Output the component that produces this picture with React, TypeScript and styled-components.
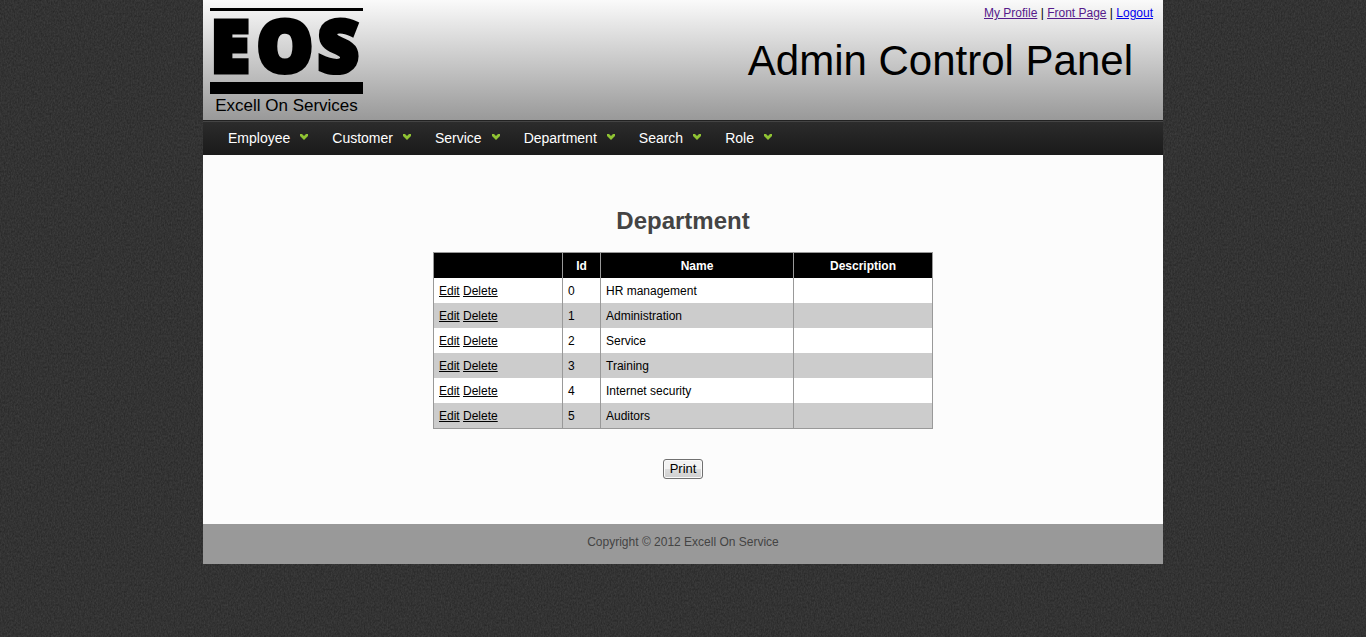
import React from "react";
import styled, { createGlobalStyle } from "styled-components";

const GlobalStyle = createGlobalStyle`
  body {
    margin: 0;
    background: #333;
    color: #000;
    font: 12px/16px "Liberation Sans", Arial, sans-serif;
  }
`;

const Texture = styled.svg`
  position: fixed;
  inset: 0;
  z-index: -1;
  width: 100%;
  height: 100%;
`;

const Page = styled.div`
  max-width: 960px;
  margin: 0 auto;
  background: #fcfcfc;
`;

const Header = styled.header`
  display: flex;
  justify-content: space-between;
  height: 120px;
  background: linear-gradient(#fafafa, #999);
`;

const Brand = styled.div`
  display: flex;
  flex-direction: column;
  width: 153px;
  margin: 8px 0 0 7px;
  text-align: center;
`;

const BrandMark = styled.svg`
  display: block;
  width: 153px;
  height: 86px;
  overflow: visible;

  text {
    font: 800 70px "Open Sans", "Liberation Sans", sans-serif;
    stroke: #000;
    stroke-width: 5px;
  }
`;

const BrandName = styled.span`
  font-size: 17px;
  line-height: 24px;
`;

const HeaderSide = styled.div`
  display: flex;
  flex-direction: column;
  align-items: flex-end;
  padding: 5px 10px 0 0;
`;

const PageLink = styled.a<{ $visited?: boolean }>`
  color: ${(p) => (p.$visited ? "#551a8b" : "#0000ee")};
`;

const PanelTitle = styled.h1`
  margin: 16px 20px 0 0;
  font-size: 42px;
  font-weight: 400;
  line-height: 48px;
`;

const Nav = styled.nav`
  display: flex;
  gap: 24px;
  box-sizing: border-box;
  height: 35px;
  padding: 0 25px;
  border-top: 1px solid #222;
  background: linear-gradient(#2c2c2c, #1a1a1a);
  box-shadow: inset 0 1px #444;
`;

const NavItem = styled.a`
  display: flex;
  align-items: center;
  gap: 10px;
  color: #fff;
  font-size: 14px;
  line-height: 34px;
  text-decoration: none;
`;

const Arrow = styled.svg`
  width: 8px;
  height: 6px;
  margin-bottom: 3px;
  fill: #8fc333;
`;

const Main = styled.main`
  display: flex;
  flex-direction: column;
  align-items: center;
  padding: 50px 20px 45px;
`;

const Heading = styled.h2`
  margin: 0 0 15px;
  color: #444;
  font-size: 24px;
  line-height: 32px;
`;

const Table = styled.table`
  width: 500px;
  max-width: 100%;
  table-layout: fixed;
  border-collapse: collapse;
  border: 1px solid #999;
  background: #fff;
`;

const Column = styled.col<{ $width?: number }>`
  width: ${(p) => (p.$width ? `${p.$width}px` : "auto")};
`;

const HeadCell = styled.th`
  height: 25px;
  padding: 0 5px;
  border: solid #999;
  border-width: 0 1px;
  background: #000;
  color: #fff;
`;

const Row = styled.tr`
  &:nth-child(even) {
    background: #ccc;
  }
`;

const Cell = styled.td`
  height: 25px;
  padding: 0 5px;
  border: solid #999;
  border-width: 0 1px;
`;

const RowLink = styled.a`
  color: #000;
`;

const PrintButton = styled.button`
  height: 20px;
  margin-top: 30px;
  padding: 0 6px;
  border: 1px solid #707070;
  border-radius: 3px;
  background: linear-gradient(#f2f2f2 50%, #ddd 50%, #cfcfcf);
  box-shadow: inset 0 0 0 1px #fafafa;
  color: #000;
  font: 13px/18px "Liberation Sans", Arial, sans-serif;
`;

const Footer = styled.footer`
  padding: 10px 0 14px;
  background: #999;
  color: #444;
  text-align: center;
`;

const menus = ["Employee", "Customer", "Service", "Department", "Search", "Role"];
const departments = [
  "HR management",
  "Administration",
  "Service",
  "Training",
  "Internet security",
  "Auditors",
];

export default function App() {
  return (
    <>
      <GlobalStyle />
      <Texture aria-hidden="true">
        <filter id="grain" x="0" y="0" width="100%" height="100%" colorInterpolationFilters="sRGB">
          <feTurbulence type="fractalNoise" baseFrequency="0.7 0.45" numOctaves="2" seed="4" />
          <feColorMatrix values="0.12 0 0 0 0.14 0.12 0 0 0 0.14 0.12 0 0 0 0.14 0 0 0 0 1" />
        </filter>
        <rect width="100%" height="100%" filter="url(#grain)" />
      </Texture>
      <Page>
        <Header>
          <Brand>
            <BrandMark viewBox="0 0 153 86" role="img" aria-label="EOS">
              <rect width="153" height="3" />
              <text x="1" y="64">E</text>
              <text x="47" y="64">O</text>
              <text x="108" y="64">S</text>
              <rect y="74" width="153" height="12" />
            </BrandMark>
            <BrandName>Excell On Services</BrandName>
          </Brand>
          <HeaderSide>
            <div>
              <PageLink href="#profile" $visited>My Profile</PageLink>
              {" | "}
              <PageLink href="#front" $visited>Front Page</PageLink>
              {" | "}
              <PageLink href="#logout">Logout</PageLink>
            </div>
            <PanelTitle>Admin Control Panel</PanelTitle>
          </HeaderSide>
        </Header>
        <Nav>
          {menus.map((name) => (
            <NavItem key={name} href={`#${name.toLowerCase()}`}>
              {name}
              <Arrow viewBox="0 0 8 6" aria-hidden="true">
                <path d="M0 0H2L4 2L6 0H8V2L4 6L0 2Z" />
              </Arrow>
            </NavItem>
          ))}
        </Nav>
        <Main>
          <Heading>Department</Heading>
          <Table>
            <colgroup>
              <Column $width={129} />
              <Column $width={38} />
              <Column $width={193} />
              <Column />
            </colgroup>
            <thead>
              <tr>
                <HeadCell />
                <HeadCell scope="col">Id</HeadCell>
                <HeadCell scope="col">Name</HeadCell>
                <HeadCell scope="col">Description</HeadCell>
              </tr>
            </thead>
            <tbody>
              {departments.map((name, id) => (
                <Row key={name}>
                  <Cell>
                    <RowLink href={`#edit-${id}`}>Edit</RowLink>{" "}
                    <RowLink href={`#delete-${id}`}>Delete</RowLink>
                  </Cell>
                  <Cell>{id}</Cell>
                  <Cell>{name}</Cell>
                  <Cell />
                </Row>
              ))}
            </tbody>
          </Table>
          <PrintButton type="button">Print</PrintButton>
        </Main>
        <Footer>Copyright © 2012 Excell On Service</Footer>
      </Page>
    </>
  );
}
